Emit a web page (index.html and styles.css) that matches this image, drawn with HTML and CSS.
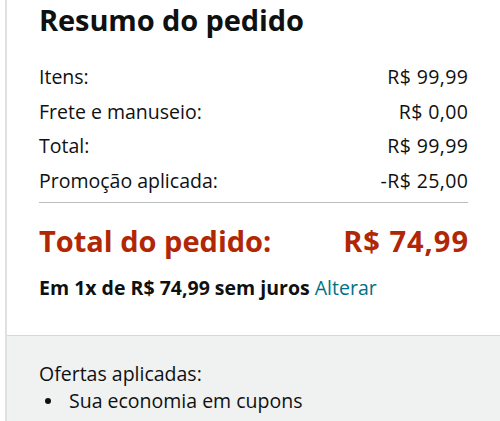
FILE: index.html
```html
<!DOCTYPE html>
<html lang="pt-BR">
<head>
<meta charset="utf-8">
<link rel="stylesheet" href="styles.css">
</head>
<body>
<div class="box">
  <div class="main">
    <h1 class="title">Resumo do pedido</h1>
    <div class="rows">
      <div class="row"><span>Itens:</span><span class="amt">R$ 99,99</span></div>
      <div class="row"><span>Frete e manuseio:</span><span class="amt">R$ 0,00</span></div>
      <div class="row"><span>Total:</span><span class="amt">R$ 99,99</span></div>
      <div class="row"><span>Promoção aplicada:</span><span class="amt">-R$ 25,00</span></div>
    </div>
    <hr class="divider">
    <div class="grand"><span>Total do pedido:</span><span class="grand-amt">R$ 74,99</span></div>
    <p class="install"><b>Em 1x de R$ 74,99 sem juros</b> <a class="link" href="#">Alterar</a></p>
  </div>
  <div class="offers">
    <p class="offers-title">Ofertas aplicadas:</p>
    <ul class="offers-list">
      <li class="offer">Sua economia em cupons</li>
    </ul>
  </div>
</div>
</body>
</html>
```
FILE: styles.css
```css
html, body {
  margin: 0;
  padding: 0;
  background: #fff;
}
body {
  font-family: "Open Sans", "Noto Sans", sans-serif;
  color: #0f1111;
  height: 421px;
  overflow: hidden;
}
.box {
  margin-left: 5px;
  border-left: 2px solid #dde1e1;
  height: 421px;
  display: flex;
  flex-direction: column;
}
.main {
  padding: 0 32px 0 32px;
  height: 335px;
  flex: none;
  box-sizing: border-box;
}
.title {
  margin: 0;
  font-size: 29px;
  font-weight: 700;
  line-height: 40px;
  letter-spacing: -0.1px;
}
.rows {
  margin-top: 20px;
  display: flex;
  flex-direction: column;
}
.row {
  display: flex;
  justify-content: space-between;
  font-size: 19.5px;
  line-height: 34.5px;
}
.amt {
  letter-spacing: 0.4px;
  margin-right: -0.4px;
}
.divider {
  margin: 4px 0 0 0;
  border: 0;
  border-top: 1px solid #b9bdbd;
}
.grand {
  margin-top: 21px;
  display: flex;
  justify-content: space-between;
  color: #b12704;
  font-size: 29px;
  font-weight: 700;
  line-height: 34px;
}
.grand-amt {
  letter-spacing: 1px;
  margin-right: -1px;
}
.install {
  margin: 18px 0 0 0;
  font-size: 19.5px;
  line-height: 24px;
}
.link {
  color: #007185;
  text-decoration: none;
}
.offers {
  flex: 1;
  background: #f0f2f2;
  border-top: 1px solid #d5d9d9;
  padding: 24px 32px 0 32px;
}
.offers-title {
  margin: 0;
  font-size: 19.5px;
  line-height: 27px;
}
.offers-list {
  margin: 0;
  padding: 0;
  list-style: none;
  font-size: 19.5px;
  line-height: 28px;
}
.offer {
  display: flex;
  align-items: center;
}
.offer::before {
  content: "";
  width: 6px;
  height: 6px;
  border-radius: 50%;
  background: #0f1111;
  margin: 0 18px 0 6px;
  flex: none;
}
```
